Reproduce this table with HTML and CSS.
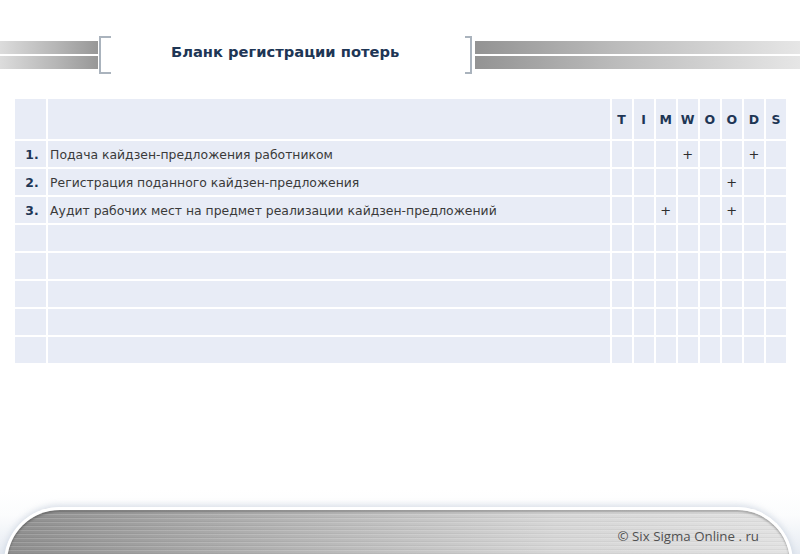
FILE: index.html
```html
<!DOCTYPE html>
<html lang="ru">
<head>
<meta charset="utf-8">
<title>Бланк регистрации потерь</title>
<link rel="stylesheet" href="styles.css">
</head>
<body>
<div class="page">
  <header class="head">
    <div class="bar bar-left"><span></span><span></span></div>
    <div class="bracket bracket-left"></div>
    <h1 class="title">Бланк регистрации потерь</h1>
    <div class="bracket bracket-right"></div>
    <div class="bar bar-right"><span></span><span></span></div>
  </header>

  <main class="content">
    <table class="grid">
      <colgroup>
        <col class="c-num"><col class="c-text">
        <col class="c-l"><col class="c-l"><col class="c-l"><col class="c-l">
        <col class="c-l"><col class="c-l"><col class="c-l"><col class="c-l">
      </colgroup>
      <thead>
        <tr class="hrow">
          <th></th><th></th>
          <th>T</th><th>I</th><th>M</th><th>W</th><th>O</th><th>O</th><th>D</th><th>S</th>
        </tr>
      </thead>
      <tbody>
        <tr><td class="num">1.</td><td class="txt">Подача кайдзен-предложения работником</td><td></td><td></td><td></td><td class="pl">+</td><td></td><td></td><td class="pl">+</td><td></td></tr>
        <tr><td class="num">2.</td><td class="txt">Регистрация поданного кайдзен-предложения</td><td></td><td></td><td></td><td></td><td></td><td class="pl">+</td><td></td><td></td></tr>
        <tr><td class="num">3.</td><td class="txt">Аудит рабочих мест на предмет реализации кайдзен-предложений</td><td></td><td></td><td class="pl">+</td><td></td><td></td><td class="pl">+</td><td></td><td></td></tr>
        <tr><td></td><td></td><td></td><td></td><td></td><td></td><td></td><td></td><td></td><td></td></tr>
        <tr><td></td><td></td><td></td><td></td><td></td><td></td><td></td><td></td><td></td><td></td></tr>
        <tr><td></td><td></td><td></td><td></td><td></td><td></td><td></td><td></td><td></td><td></td></tr>
        <tr><td></td><td></td><td></td><td></td><td></td><td></td><td></td><td></td><td></td><td></td></tr>
        <tr><td></td><td></td><td></td><td></td><td></td><td></td><td></td><td></td><td></td><td></td></tr>
      </tbody>
    </table>
  </main>

  <footer class="foot">
    <div class="foot-bar">
      <span class="copy">© Six Sigma Online . ru</span>
    </div>
  </footer>
</div>
</body>
</html>
```

FILE: styles.css
```css
* { box-sizing: border-box; }
html, body {
  margin: 0;
  padding: 0;
  background: #ffffff;
}
body {
  width: 800px;
  height: 554px;
  overflow: hidden;
  font-family: "DejaVu Sans", Verdana, sans-serif;
}
.page {
  width: 800px;
  height: 554px;
  display: flex;
  flex-direction: column;
}
.page > * { flex-shrink: 0; }

/* ---------- header ---------- */
.head {
  height: 97px;
  display: flex;
  align-items: flex-start;
  padding-top: 36px;
}
.bar {
  margin-top: 5px;
  height: 29px;
  display: flex;
  flex-direction: column;
  gap: 2px;
}
.bar span {
  display: block;
  height: 13px;
}
.bar-left { width: 98px; }
.bar-left span {
  background: linear-gradient(to right, #dcdcdc 0%, #b4b4b4 60%, #979797 100%);
}
.bar-right { width: 325px; margin-left: 3px; }
.bar-right span {
  background: linear-gradient(to right, #939393 0%, #bdbdbd 45%, #e6e6e6 100%);
}
.bracket {
  width: 12px;
  height: 38px;
  border: 2px solid #aab3bd;
}
.bracket-left { border-right: none; margin-left: 1px; }
.bracket-right { border-left: none; width: 7px; }
.title {
  flex: 1;
  margin: 0;
  padding: 7px 0 0 60px;
  font-family: "DejaVu Sans", Verdana, sans-serif;
  font-size: 14.7px;
  font-weight: bold;
  color: #1e3655;
}

/* ---------- table ---------- */
.content {
  height: 393px;
  padding-left: 13px;
}
.grid {
  border-collapse: separate;
  border-spacing: 2px 2px;
  table-layout: fixed;
  width: 775px;
}
.c-num { width: 31px; }
.c-text { width: 560px; }
.c-l { width: 20px; }
.grid th, .grid td {
  background: #e8ecf6;
  padding: 0;
  height: 26px;
  font-size: 12.4px;
  color: #3a3a3a;
}
.hrow th {
  height: 40px;
  font-size: 12.5px;
  font-weight: bold;
  color: #1e3655;
  text-align: center;
}
.num {
  text-align: center;
  font-weight: bold;
  font-size: 12.5px;
  color: #1e3655 !important;
  padding-left: 3px !important;
}
.txt {
  padding-left: 2px !important;
  white-space: nowrap;
}
.pl {
  text-align: center;
  font-family: "DejaVu Sans", sans-serif;
  font-size: 13px !important;
  color: #2e2e2e !important;
}

/* ---------- footer ---------- */
.foot {
  height: 64px;
  overflow: hidden;
  padding: 17px 7px 0 4px;
  background: linear-gradient(to bottom, #ffffff 0%, #fbfcfd 40%, #e6ebf2 100%);
}
.foot-bar {
  height: 60px;
  border: 3px solid #ffffff;
  border-bottom: none;
  border-radius: 56px 56px 0 0;
  background:
    repeating-linear-gradient(to bottom, rgba(255,255,255,0.15) 0px, rgba(255,255,255,0.15) 1px, rgba(0,0,0,0) 1px, rgba(0,0,0,0) 3px, rgba(0,0,0,0.04) 3px, rgba(0,0,0,0.04) 4px),
    linear-gradient(to right, #8e8e8e 0%, #b3b3b3 35%, #d6d6d6 70%, #e2e2e2 100%);
  box-shadow: 0 -2px 6px rgba(170,185,205,0.45), inset 0 2px 2px rgba(0,0,0,0.25);
  display: flex;
  justify-content: flex-end;
  padding: 17px 31px 0 0;
}
.copy {
  font-family: "Open Sans", "Noto Sans", sans-serif;
  font-size: 13.3px;
  color: #505050;
}
```
